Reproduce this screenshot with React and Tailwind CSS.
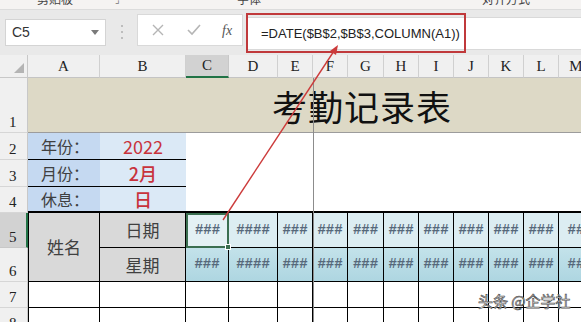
import React from "react";

const cols = ["A","B","C","D","E","F","G","H","I","J","K","L","M"];
const hashes = ["###","####","###","###","###","###","###","###","###","###","##"];

export default function App() {
  return (
    <div className="w-[581px] h-[322px] overflow-hidden relative bg-white font-['Noto_Sans_CJK_SC',sans-serif]">
      {/* ribbon remnant */}
      <div className="h-[10px] bg-[#f5f3f2] overflow-hidden relative border-b border-[#dcdcdc]">
        <div className="flex text-[12px] leading-[14px] text-[#444] -mt-[8px] whitespace-nowrap">
          <span className="ml-[37px]">剪贴板</span>
          <span className="ml-[42px] text-[10px] text-[#777]">⌟</span>
          <span className="ml-[117px]">字体</span>
          <span className="ml-[221px]">对齐方式</span>
        </div>
      </div>
      {/* formula bar */}
      <div className="h-[45px] bg-[#e9e9e9] flex items-start pl-[5px]">
        <div className="mt-[9px] w-[101px] h-[27px] bg-white border border-[#d4d4d4] flex items-center justify-between pl-[6px] pr-[6px]">
          <span className="text-[14px] text-[#333] font-['Liberation_Sans',sans-serif]">C5</span>
          <span className="w-0 h-0 border-l-[4px] border-r-[4px] border-t-[5px] border-l-transparent border-r-transparent border-t-[#7a7a7a]" />
        </div>
        <div className="mt-[15px] ml-[15px] w-[2px] h-[14px] flex flex-col justify-between">
          <span className="w-[2px] h-[2px] bg-[#bdbdbd]" />
          <span className="w-[2px] h-[2px] bg-[#bdbdbd]" />
          <span className="w-[2px] h-[2px] bg-[#bdbdbd]" />
        </div>
        <div className="mt-[4px] ml-[14px] w-[106px] h-[32px] bg-white border border-[#d9d9d9] flex items-center">
          <svg width="12" height="12" viewBox="0 0 12 12" className="ml-[14px]">
            <path d="M1 1 L11 11 M11 1 L1 11" stroke="#b5b5b5" strokeWidth="1.4" />
          </svg>
          <svg width="14" height="12" viewBox="0 0 14 12" className="ml-[23px]">
            <path d="M1 6 L5 10 L13 1" stroke="#b5b5b5" strokeWidth="1.6" fill="none" />
          </svg>
          <span className="ml-[21px] text-[14px] italic text-[#555] font-['Liberation_Serif',serif]">fx</span>
        </div>
        <div className="mt-[7px] ml-[3px] flex-1 h-[33px] bg-white border-y border-[#d9d9d9] flex items-center pl-[15px]">
          <span className="text-[13px] text-[#222] font-['Liberation_Sans',sans-serif] whitespace-nowrap">=DATE($B$2,$B$3,COLUMN(A1))</span>
        </div>
      </div>

      {/* sheet grid */}
      <div className="grid grid-cols-[28px_72px_86px_43px_49px_35px_35px_36px_35px_35px_35px_35px_35px_35px] grid-rows-[23px_55px_27px_27px_26px_35px_34px_26px_26px]">
        {/* header row */}
        <div className="bg-[#f0f0f0] border-r border-b border-[#c8c8c8] relative">
          <svg className="absolute right-[3px] bottom-[4px]" width="10" height="10" viewBox="0 0 10 10">
            <path d="M10 0 L10 10 L0 10 Z" fill="#b4b4b4" />
          </svg>
        </div>
        {cols.map((c) => (
          <div
            key={c}
            className={
              c === "C"
                ? "bg-[#d2d2d2] border-r border-[#c8c8c8] border-b-2 border-b-[#217346] flex items-center justify-center text-[15px] text-[#222] font-['Liberation_Serif',serif]"
                : "bg-[#f0f0f0] border-r border-b border-[#d0d0d0] border-b-[#c4c4c4] flex items-center justify-center text-[15px] text-[#222] font-['Liberation_Serif',serif]"
            }
          >
            {c}
          </div>
        ))}

        {/* row 1 */}
        <RowHead n="1" />
        <div className="col-span-13 bg-[#ddd9c6] border-b border-[#9c9c9c] flex items-center pl-[244px]">
          <span className="text-[35px] leading-none text-[#111] tracking-[1px]">考勤记录表</span>
        </div>

        {/* row 2 */}
        <RowHead n="2" />
        <div className="bg-[#c5d9f1] border-b border-black flex items-center pl-[13px] text-[16px] text-[#404040]">年份：</div>
        <div className="bg-[#dbe9f6] border-b border-black flex items-center justify-center text-[18px] text-[#c8323c]">2022</div>
        <div className="col-span-11 row-span-3 bg-white border-b-2 border-black" />

        {/* row 3 */}
        <RowHead n="3" />
        <div className="bg-[#c5d9f1] border-b border-black flex items-center pl-[13px] text-[16px] text-[#404040]">月份：</div>
        <div className="bg-[#dbe9f6] border-b border-black flex items-center justify-center text-[18px] font-medium text-[#c8323c]">2月</div>

        {/* row 4 */}
        <RowHead n="4" />
        <div className="bg-[#c5d9f1] border-b-2 border-black flex items-center pl-[13px] text-[16px] text-[#404040]">休息：</div>
        <div className="bg-[#dbe9f6] border-b-2 border-black flex items-center justify-center text-[18px] font-medium text-[#c8323c]">日</div>

        {/* row 5 */}
        <RowHead n="5" selected />
        <div className="row-span-2 bg-[#d9d9d9] border-l border-r border-b border-black flex items-center justify-center text-[17px] text-[#404040]">姓名</div>
        <div className="bg-[#d9d9d9] border-r border-b border-black flex items-center justify-center text-[17px] text-[#404040]">日期</div>
        {hashes.map((h, i) => (
          <div
            key={"r5" + i}
            className={
              i === 0
                ? "relative bg-[#e4f1f4] border-2 border-[#3b6f50] flex items-center justify-center text-[14px] font-bold text-[#56687a] font-['Liberation_Mono',monospace]"
                : "bg-[#dcedf2] border-r border-b border-black flex items-center justify-center text-[14px] font-bold text-[#56687a] font-['Liberation_Mono',monospace] overflow-hidden whitespace-nowrap"
            }
          >
            {h}
            {i === 0 && (
              <span className="absolute -right-[4px] -bottom-[4px] w-[6px] h-[6px] bg-[#3b6f50] border border-white" />
            )}
          </div>
        ))}

        {/* row 6 */}
        <RowHead n="6" />
        <div className="bg-[#d9d9d9] border-r border-b border-black flex items-center justify-center text-[17px] text-[#404040]">星期</div>
        {hashes.map((h, i) => (
          <div
            key={"r6" + i}
            className="bg-[linear-gradient(#c3e2ea,#aed6e1)] border-r border-b border-black flex items-center justify-center text-[14px] font-bold text-[#56687a] font-['Liberation_Mono',monospace] overflow-hidden whitespace-nowrap"
          >
            {h}
          </div>
        ))}

        {/* row 7 and 8 */}
        {["7", "8"].map((n) => (
          <React.Fragment key={n}>
            <RowHead n={n} />
            {cols.map((c) => (
              <div key={c} className={c === "A" ? "border-l border-r border-b border-black" : "border-r border-b border-black"} />
            ))}
          </React.Fragment>
        ))}
      </div>

      {/* freeze line */}
      <div className="absolute left-[313px] top-[78px] w-px h-[244px] bg-[#8c8c8c]" />

      {/* annotation rectangle */}
      <div className="absolute left-[246px] top-[13px] w-[220px] h-[40px] border-2 border-[#c0393b]" />

      {/* arrow */}
      <svg className="absolute left-0 top-0" width="581" height="322" viewBox="0 0 581 322">
        <line x1="223" y1="220" x2="334" y2="51" stroke="#cc3b3b" strokeWidth="1.4" />
        <path d="M338 45 L330 51 L336 55 Z" fill="#cc3b3b" />
      </svg>

      {/* watermark */}
      <div className="absolute left-[478px] top-[291px] text-[15px] leading-[20px] whitespace-nowrap text-white [-webkit-text-stroke:0.7px_#555]">
        头条 @企学社
      </div>
    </div>
  );
}

function RowHead({ n, selected }) {
  return (
    <div
      className={
        selected
          ? "bg-[#d2d2d2] border-r-2 border-r-[#217346] border-b border-b-[#c8c8c8] flex items-end pl-[9px] pb-[1px] text-[15px] leading-[18px] text-[#222] font-['Liberation_Serif',serif]"
          : "bg-[#f0f0f0] border-r border-r-[#c8c8c8] border-b border-b-[#d6d6d6] flex items-end pl-[9px] pb-[1px] text-[15px] leading-[18px] text-[#222] font-['Liberation_Serif',serif]"
      }
    >
      {n}
    </div>
  );
}
